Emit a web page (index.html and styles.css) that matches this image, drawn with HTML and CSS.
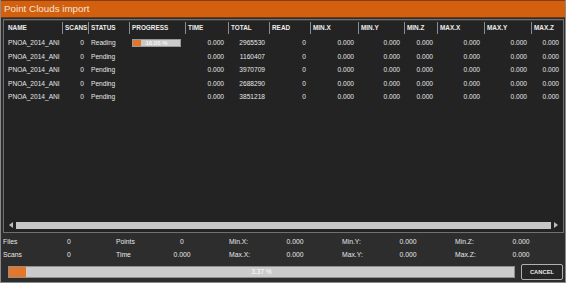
FILE: index.html
```html
<!DOCTYPE html>
<html>
<head>
<meta charset="utf-8">
<link rel="stylesheet" href="styles.css">
</head>
<body>
<div class="window">
  <div class="titlebar">Point Clouds import</div>
  <div class="grid">
    <div class="row head">
      <div class="c first">NAME</div>
      <div class="c">SCANS</div>
      <div class="c">STATUS</div>
      <div class="c">PROGRESS</div>
      <div class="c">TIME</div>
      <div class="c">TOTAL</div>
      <div class="c">READ</div>
      <div class="c">MIN.X</div>
      <div class="c">MIN.Y</div>
      <div class="c">MIN.Z</div>
      <div class="c">MAX.X</div>
      <div class="c">MAX.Y</div>
      <div class="c">MAX.Z</div>
    </div>
    <div class="row">
      <div class="c name">PNOA_2014_ANI</div><div class="c r">0</div><div class="c status">Reading</div>
      <div class="c prog"><div class="pbar"><div class="pfill" style="width:16.06%"></div><span>16.06 %</span></div></div>
      <div class="c r">0.000</div><div class="c r">2965530</div><div class="c r">0</div><div class="c r">0.000</div><div class="c r">0.000</div><div class="c r">0.000</div><div class="c r">0.000</div><div class="c r">0.000</div><div class="c r">0.000</div>
    </div>
    <div class="row">
      <div class="c name">PNOA_2014_ANI</div><div class="c r">0</div><div class="c status">Pending</div><div class="c prog"></div>
      <div class="c r">0.000</div><div class="c r">1160407</div><div class="c r">0</div><div class="c r">0.000</div><div class="c r">0.000</div><div class="c r">0.000</div><div class="c r">0.000</div><div class="c r">0.000</div><div class="c r">0.000</div>
    </div>
    <div class="row">
      <div class="c name">PNOA_2014_ANI</div><div class="c r">0</div><div class="c status">Pending</div><div class="c prog"></div>
      <div class="c r">0.000</div><div class="c r">3970709</div><div class="c r">0</div><div class="c r">0.000</div><div class="c r">0.000</div><div class="c r">0.000</div><div class="c r">0.000</div><div class="c r">0.000</div><div class="c r">0.000</div>
    </div>
    <div class="row">
      <div class="c name">PNOA_2014_ANI</div><div class="c r">0</div><div class="c status">Pending</div><div class="c prog"></div>
      <div class="c r">0.000</div><div class="c r">2688290</div><div class="c r">0</div><div class="c r">0.000</div><div class="c r">0.000</div><div class="c r">0.000</div><div class="c r">0.000</div><div class="c r">0.000</div><div class="c r">0.000</div>
    </div>
    <div class="row">
      <div class="c name">PNOA_2014_ANI</div><div class="c r">0</div><div class="c status">Pending</div><div class="c prog"></div>
      <div class="c r">0.000</div><div class="c r">3851218</div><div class="c r">0</div><div class="c r">0.000</div><div class="c r">0.000</div><div class="c r">0.000</div><div class="c r">0.000</div><div class="c r">0.000</div><div class="c r">0.000</div>
    </div>
    <div class="spacer"></div>
    <div class="hscroll">
      <svg class="arrow" width="4" height="6" viewBox="0 0 4 6"><path d="M4 0 L0 3 L4 6 Z" fill="#bdbdbd"/></svg>
      <div class="thumb"></div>
      <svg class="arrow" width="4" height="6" viewBox="0 0 4 6"><path d="M0 0 L4 3 L0 6 Z" fill="#bdbdbd"/></svg>
    </div>
  </div>
  <div class="stats">
    <div class="sg"><span class="lbl">Files</span><span class="val">0</span></div>
    <div class="sg"><span class="lbl">Points</span><span class="val">0</span></div>
    <div class="sg"><span class="lbl">Min.X:</span><span class="val">0.000</span></div>
    <div class="sg"><span class="lbl">Min.Y:</span><span class="val">0.000</span></div>
    <div class="sg"><span class="lbl">Min.Z:</span><span class="val">0.000</span></div>
    <div class="sg"><span class="lbl">Scans</span><span class="val">0</span></div>
    <div class="sg"><span class="lbl">Time</span><span class="val">0.000</span></div>
    <div class="sg"><span class="lbl">Max.X:</span><span class="val">0.000</span></div>
    <div class="sg"><span class="lbl">Max.Y:</span><span class="val">0.000</span></div>
    <div class="sg"><span class="lbl">Max.Z:</span><span class="val">0.000</span></div>
  </div>
  <div class="footer">
    <div class="bigbar"><div class="bigfill" style="width:3.37%"></div><span>3.37 %</span></div>
    <button class="cancel">CANCEL</button>
  </div>
</div>
</body>
</html>
```
FILE: styles.css
```css
* { box-sizing: border-box; }
html, body { margin: 0; padding: 0; }
body {
  width: 566px;
  height: 283px;
  background: #2d2d2d;
  font-family: "Liberation Sans", Arial, sans-serif;
  color: #e6e6e6;
  overflow: hidden;
}
.window {
  width: 566px;
  height: 283px;
  border: 1px solid #8a8a8a;
  border-top: none;
  display: flex;
  flex-direction: column;
}
.titlebar {
  height: 18px;
  background: #d3600f;
  border-top: 1px solid #8a3c10;
  border-bottom: 1px solid #6d3a18;
  color: #f5e3d6;
  font-size: 9.8px;
  line-height: 16px;
  padding-left: 3px;
  flex: none;
}
.grid {
  margin: 1px 1px 0 2px;
  height: 214px;
  border: 1px solid #707070;
  background: #232323;
  display: flex;
  flex-direction: column;
  flex: none;
}
.row {
  display: grid;
  grid-template-columns: 58px 26px 41px 56px 43px 41px 41px 48px 46px 33px 47px 47px 1fr;
  height: 13.5px;
  align-items: center;
  font-size: 6.6px;
}
.row.head {
  height: 15px;
  border-top: 1px solid #3a3a3a;
  font-weight: bold;
  font-size: 6.4px;
  color: #ececec;
  margin-bottom: 1px;
}
.head .c {
  height: 12px;
  line-height: 12px;
  border-left: 1px solid #8c8c8c;
  padding-left: 2px;
}
.head .c.first { border-left: none; padding-left: 4px; }
.c { white-space: nowrap; overflow: hidden; line-height: 11px; }
.c.name { padding-left: 4px; }
.c.r { text-align: right; padding-right: 4px; }
.c.status { padding-left: 3px; }
.c.prog { padding: 0 4px 0 3px; }
.pbar {
  position: relative;
  height: 8px;
  background: #cacaca;
  border: 1px solid #9a9a9a;
}
.pfill {
  height: 100%;
  background: #e2762a;
}
.pbar span {
  position: absolute;
  left: 0; right: 0; top: 0;
  text-align: center;
  font-size: 6px;
  line-height: 6px;
  color: #ffffff;
}
.spacer { flex: 1; }
.hscroll {
  display: flex;
  align-items: center;
  gap: 3px;
  height: 10px;
  margin: 0 5px 2px 5px;
}
.hscroll .thumb {
  flex: 1;
  height: 7px;
  background: #c6c6c6;
}
.stats {
  display: grid;
  grid-template-columns: repeat(5, 113px);
  grid-auto-rows: 13px;
  padding: 2px 0 0 2px;
  font-size: 6.8px;
  flex: none;
}
.sg {
  display: flex;
  align-items: center;
}
.lbl { width: 44px; }
.val { width: 44px; text-align: center; }
.footer {
  display: flex;
  align-items: center;
  gap: 6px;
  padding: 3px 2px 0 7px;
}
.bigbar {
  position: relative;
  flex: 1;
  height: 12px;
  background: #cbcbcb;
  border: 1px solid #8f8f8f;
}
.bigfill {
  height: 100%;
  background: #e2762a;
}
.bigbar span {
  position: absolute;
  left: 0; right: 0; top: 0;
  text-align: center;
  font-size: 6.5px;
  line-height: 10px;
  color: #ffffff;
}
.cancel {
  width: 42px;
  height: 16px;
  background: #262626;
  border: 1px solid #b0b0b0;
  border-radius: 2px;
  color: #e8e8e8;
  font-family: "Liberation Sans", Arial, sans-serif;
  font-weight: bold;
  font-size: 5.8px;
  padding: 0;
}
```
